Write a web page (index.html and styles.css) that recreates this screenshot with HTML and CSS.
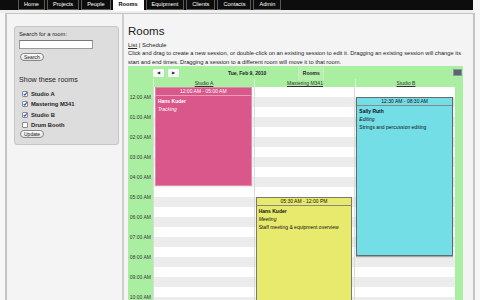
FILE: index.html
```html
<!DOCTYPE html>
<html lang="en">
<head>
    <meta charset="UTF-8">
    <title>Rooms</title>
    <link rel="stylesheet" href="styles.css">
</head>
<body>
    <div class="nav">
        <a class="tab">Home</a>
        <a class="tab">Projects</a>
        <a class="tab">People</a>
        <a class="tab active">Rooms</a>
        <a class="tab">Equipment</a>
        <a class="tab">Clients</a>
        <a class="tab">Contacts</a>
        <a class="tab">Admin</a>
    </div>
    <div class="strip"></div>

    <div class="frame">
        <div class="side">
            <div class="box">
                <p class="lbl">Search for a room:</p>
                <input class="search-in" type="text">
                <button class="pill">Search</button>
                <p class="show">Show these rooms</p>
                <ul class="rooms">
                    <li><span class="cb on"><svg viewBox="0 0 6 6"><path d="M1 3 L2.5 4.6 L5.2 0.8"/></svg></span>Studio A</li>
                    <li><span class="cb on"><svg viewBox="0 0 6 6"><path d="M1 3 L2.5 4.6 L5.2 0.8"/></svg></span>Mastering M341</li>
                    <li><span class="cb on"><svg viewBox="0 0 6 6"><path d="M1 3 L2.5 4.6 L5.2 0.8"/></svg></span>Studio B</li>
                    <li><span class="cb"></span>Drum Booth</li>
                </ul>
                <button class="pill">Update</button>
            </div>
        </div>

        <div class="main">
            <h1>Rooms</h1>
            <p class="links"><a>List</a> | Schedule</p>
            <p class="help">Click and drag to create a new session, or double-click on an existing session to edit it. Dragging an existing session will change its start and end times. Dragging a session to a different room will move it to that room.</p>

            <div class="cal">
                <div class="cal-top">
                    <span class="arrow">&#9664;</span>
                    <span class="arrow">&#9654;</span>
                    <span class="date">Tue, Feb 9, 2010</span>
                    <span class="view">Rooms</span>
                    <span class="mini"></span>
                </div>
                <div class="cal-heads">
                    <div class="gutter"></div>
                    <div class="head"><a>Studio A</a></div>
                    <div class="head"><a>Mastering M341</a></div>
                    <div class="head"><a>Studio B</a></div>
                </div>
                <div class="cal-body">
                    <div class="times">
                        <div class="hr">12:00 AM</div>
                        <div class="hr">01:00 AM</div>
                        <div class="hr">02:00 AM</div>
                        <div class="hr">03:00 AM</div>
                        <div class="hr">04:00 AM</div>
                        <div class="hr">05:00 AM</div>
                        <div class="hr">06:00 AM</div>
                        <div class="hr">07:00 AM</div>
                        <div class="hr">08:00 AM</div>
                        <div class="hr">09:00 AM</div>
                        <div class="hr">10:00 AM</div>
                    </div>
                    <div class="col">
                        <div class="ev pink" style="top: 0px; height: 99px;">
                            <div class="ev-time">12:00 AM - 05:00 AM</div>
                            <b>Hans Kuder</b>
                            <i>Tracking</i>
                        </div>
                    </div>
                    <div class="col">
                        <div class="ev yellow" style="top: 110px; height: 140px;">
                            <div class="ev-time">05:30 AM - 12:00 PM</div>
                            <b>Hans Kuder</b>
                            <i>Meeting</i>
                            <span>Staff meeting &amp; equipment overview</span>
                        </div>
                    </div>
                    <div class="col">
                        <div class="ev cyan" style="top: 10px; height: 159px;">
                            <div class="ev-time">12:30 AM - 08:30 AM</div>
                            <b>Sally Ruth</b>
                            <i>Editing</i>
                            <span>Strings and percussion editing</span>
                        </div>
                    </div>
                    <div class="edge"></div>
                </div>
            </div>
        </div>
    </div>
</body>
</html>
```

FILE: styles.css
```css
body{
    margin: 0;
    height: 300px;
    background-color: #f7f7f7;
    font-family: "Liberation Sans", Arial, sans-serif;
    color: #222;
    overflow: hidden;
}
p{
    margin: 0;
}

/* top tabs */
.nav{
    width: 473px;
    height: 10px;
    background-color: #0d0d0d;
    display: flex;
    gap: 2px;
    padding-left: 18px;
    box-sizing: border-box;
}
.tab{
    height: 9px;
    line-height: 9px;
    padding: 0 5px;
    border: 1px solid #5a5a5a;
    border-top: none;
    color: #fff;
    font-size: 5.6px;
}
.tab.active{
    height: 10px;
    background-color: #fff;
    border-color: #fff;
    color: #000;
    font-weight: bold;
}
.strip{
    width: 473px;
    height: 3px;
    background-color: #eeeeee;
}

.frame{
    margin-left: 5px;
    width: 470px;
    height: 287px;
    box-sizing: border-box;
    border: 2px solid #c4c4c4;
    border-top: 1px solid #c4c4c4;
    border-bottom: none;
    background-color: #f4f4f4;
    display: flex;
    overflow: hidden;
}

/* sidebar */
.side{
    width: 117px;
    border-right: 2px solid #cfcfcf;
    padding: 12px 0 0 7px;
    box-sizing: border-box;
    flex-shrink: 0;
}
.box{
    width: 105px;
    height: 119px;
    box-sizing: border-box;
    background-color: #dddddd;
    border: 1px solid #c6c6c6;
    border-radius: 3px;
    padding: 4px 0 0 4px;
}
.lbl{
    font-size: 5.8px;
    line-height: 7px;
}
.search-in{
    display: block;
    margin: 2px 0 0 0;
    width: 74px;
    height: 9px;
    box-sizing: border-box;
    border: 1px solid #9a9a9a;
    border-top-color: #777;
    background-color: #fff;
    padding: 0;
}
.pill{
    display: block;
    margin: 4px 0 0 1px;
    height: 8px;
    padding: 0 3px;
    border: 1px solid #888;
    border-radius: 5px;
    background: linear-gradient(#fff, #e4e4e4);
    font-family: "Liberation Sans", Arial, sans-serif;
    font-size: 5px;
    line-height: 6px;
    color: #222;
}
.show{
    margin-top: 15px;
    font-size: 7.1px;
    line-height: 9px;
}
.rooms{
    list-style: none;
    margin: 4px 0 0 0;
    padding: 0;
}
.rooms li{
    height: 10.3px;
    display: flex;
    align-items: center;
    font-size: 5.8px;
    font-weight: bold;
}
.cb{
    width: 6px;
    height: 6px;
    box-sizing: border-box;
    margin: 0 3px 0 3px;
    border: 1px solid #8a8a8a;
    background-color: #fff;
    border-radius: 1px;
    display: flex;
}
.cb svg{
    width: 6px;
    height: 6px;
    margin: -1px 0 0 -0.5px;
    fill: none;
    stroke: #2c5fd0;
    stroke-width: 1.5;
}
.box .rooms + .pill{
    margin-top: 0;
}

/* main area */
.main{
    flex: 1;
    padding: 10px 8px 0 4px;
}
h1{
    margin: 0;
    font-size: 11.5px;
    line-height: 14px;
    font-weight: normal;
    color: #222;
}
.links{
    margin-top: 3px;
    font-size: 5.9px;
    line-height: 8px;
}
.links a{
    text-decoration: underline;
}
.help{
    font-size: 5.75px;
    line-height: 8.7px;
    color: #222;
    width: 338px;
}

/* calendar */
.cal{
    width: 335px;
    background-color: #aaeea2;
    font-size: 5px;
}
.cal-top{
    height: 13px;
    display: flex;
    align-items: center;
    padding-left: 25px;
    position: relative;
}
.arrow{
    width: 11px;
    height: 8px;
    margin-right: 4px;
    background-color: #fafafa;
    border-radius: 1px;
    font-size: 3.5px;
    line-height: 8px;
    text-align: center;
    color: #222;
}
.date{
    margin-left: 45px;
    font-weight: bold;
    font-size: 5px;
}
.view{
    margin-left: 32px;
    align-self: flex-end;
    height: 13px;
    width: 26px;
    box-sizing: border-box;
    margin-bottom: -1px;
    border-left: 1px solid #c5f3bf;
    border-right: 1px solid #c5f3bf;
    background-color: #b5f0ad;
    text-align: center;
    font-weight: bold;
    line-height: 12px;
}
.mini{
    margin-left: auto;
    margin-right: 1px;
    width: 7px;
    height: 5px;
    background-color: #5b6470;
    border: 1px solid #8a93a0;
}
.cal-heads{
    height: 8px;
    display: flex;
    line-height: 8px;
}
.gutter{
    width: 25px;
}
.head{
    width: 100px;
    border-left: 1px solid #d9f7d4;
    text-align: center;
    color: #333;
}
.head a{
    text-decoration: underline;
}

.cal-body{
    display: flex;
    height: 213px;
    overflow: hidden;
}
.times{
    width: 25px;
}
.hr{
    height: 20px;
    line-height: 20px;
    text-align: right;
    padding-right: 2px;
    color: #333;
}
.col{
    width: 100px;
    position: relative;
    border-left: 1px solid #dcdcdc;
    background: repeating-linear-gradient(#fff 0, #fff 10px, #ececec 10px, #ececec 20px);
}
.edge{
    width: 8px;
}

/* sessions */
.ev{
    position: absolute;
    left: 1px;
    right: 2px;
    box-sizing: border-box;
    border: 1px solid #666;
    padding: 0 0 0 2px;
    line-height: 7.6px;
    font-size: 5px;
    color: #111;
}
.ev-time{
    margin: 0 0 2px -2px;
    height: 7px;
    line-height: 7px;
    text-align: center;
    border-bottom: 1px solid #888;
}
.ev b, .ev i, .ev span{
    display: block;
}
.pink{
    background-color: #d9578a;
    border-color: #e48aab;
    color: #fff;
}
.pink .ev-time{
    border-bottom-color: #e99bb8;
}
.yellow{
    background-color: #e8ea6e;
    border-color: #7a7a6a;
}
.cyan{
    background-color: #74dee6;
    border-color: #5e6e70;
    box-shadow: 0 1px 1px rgba(0, 0, 0, .35);
}
```
